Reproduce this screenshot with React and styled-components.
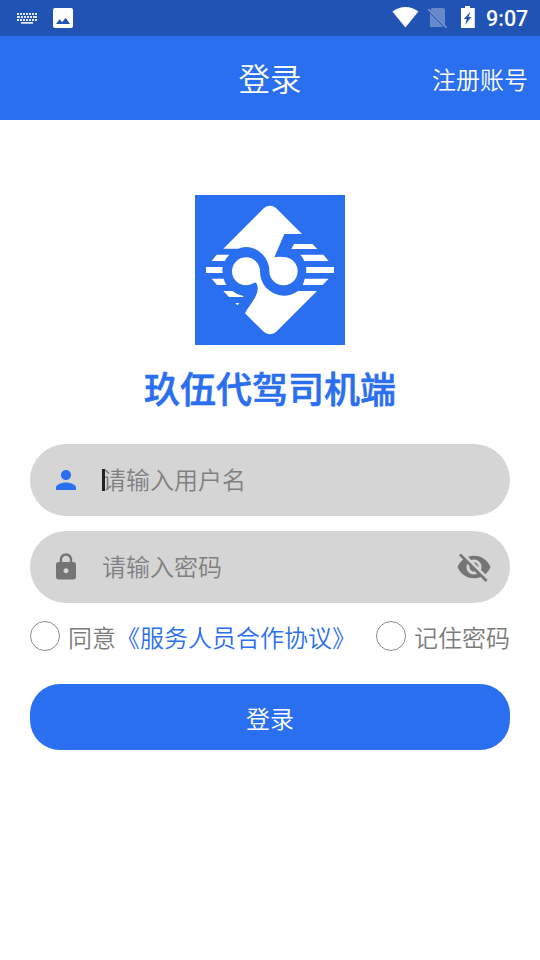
import styled, { createGlobalStyle } from "styled-components";
import { MdLock, MdPerson, MdVisibilityOff } from "react-icons/md";

const GlobalStyle = createGlobalStyle`
  * {
    box-sizing: border-box;
  }

  body {
    margin: 0;
    background: #fff;
    font-family: "Noto Sans CJK SC", sans-serif;
    font-weight: 350;
  }
`;

const Screen = styled.div`
  height: 960px;
  overflow: hidden;
`;

const StatusBar = styled.div`
  display: flex;
  align-items: center;
  justify-content: space-between;
  height: 36px;
  padding: 0 12px 0 16px;
  background: #2153b4;
  color: #fff;

  svg {
    display: block;
  }
`;

const StatusGroup = styled.div`
  display: flex;
  align-items: center;
  gap: ${(props) => props.$gap}px;
  height: 36px;
`;

const Clock = styled.span`
  width: 42px;
  padding-top: 2px;
  font-family: Roboto, sans-serif;
  font-size: 21.5px;
  font-weight: 500;
  line-height: 34px;
  white-space: nowrap;
`;

const Header = styled.header`
  display: grid;
  grid-template-columns: 1fr auto 1fr;
  align-items: center;
  height: 84px;
  padding: 0 12px;
  background: #2b6ff1;
  color: #fff;
`;

const HeaderTitle = styled.h1`
  grid-column: 2;
  margin: 0;
  font-size: 31.5px;
  font-weight: 350;
  line-height: 82px;
  padding-bottom: 2px;
`;

const RegisterLink = styled.a`
  justify-self: end;
  padding-top: 2px;
  font-size: 24px;
  line-height: 82px;
`;

const Content = styled.main`
  display: flex;
  flex-direction: column;
  padding: 75px 30px 0;
`;

const Logo = styled.svg`
  display: block;
  align-self: center;
  width: 150px;
  height: 150px;
  background: #2b6ff1;
`;

const BrandName = styled.h2`
  margin: 15px 0 30px;
  color: #2b6ff1;
  font-size: 36px;
  font-weight: 500;
  line-height: 54px;
  text-align: center;
  -webkit-text-stroke: 0.6px #2b6ff1;
`;

const Field = styled.div`
  display: flex;
  align-items: center;
  height: 72px;
  margin-bottom: 15px;
  padding: 0 18px 0 21px;
  border-radius: 36px;
  background: #d5d5d5;
  color: ${(props) => props.$iconColor || "#757575"};

  svg {
    flex: none;
  }
`;

const Placeholder = styled.span`
  flex: 1;
  margin-left: 21px;
  padding-bottom: 2px;
  color: #808080;
  font-size: 24px;
  line-height: 70px;
`;

const Caret = styled.span`
  z-index: 1;
  width: 3px;
  height: 22px;
  margin: 0 -3px 0 21px;
  background: #222;

  & + ${Placeholder} {
    margin-left: 0;
  }
`;

const Options = styled.div`
  display: flex;
  justify-content: space-between;
  height: 66px;
`;

const Option = styled.label`
  display: flex;
  align-items: center;
  height: 36px;
  color: #7c7c7c;
  font-size: 24px;
  white-space: nowrap;
`;

const OptionText = styled.span`
  padding-top: 2px;
  line-height: 36px;
`;

const Radio = styled.span`
  width: 30px;
  height: 30px;
  margin-right: 8px;
  border: 1.5px solid #8c8c8c;
  border-radius: 50%;
`;

const Agreement = styled.a`
  color: #2b6ff1;
`;

const SubmitButton = styled.button`
  height: 66px;
  padding: 2px 0 0;
  border: 0;
  border-radius: 30px;
  background: #2b6ff1;
  color: #fff;
  font-family: inherit;
  font-size: 24px;
  font-weight: 350;
  line-height: 64px;
`;

const KeyboardIcon = () => (
  <svg width="22" height="12" viewBox="0 0 22 12" fill="#e4ebf7">
    <path d="M1 1h2v2H1zM4 1h2v2H4zM7 1h2v2H7zM10 1h2v2h-2zM13 1h2v2h-2zM16 1h2v2h-2zM19 1h2v2h-2z" />
    <path d="M1 4h3v2H1zM5 4h2v2H5zM8 4h2v2H8zM11 4h2v2h-2zM14 4h2v2h-2zM17 4h4v2h-4z" />
    <path d="M1 7h2v2H1zM4 7h2v2H4zM7 7h2v2H7zM10 7h2v2h-2zM13 7h2v2h-2zM16 7h2v2h-2zM19 7h2v2h-2zM5 10h12v1.8H5z" />
  </svg>
);

const ImageIcon = () => (
  <svg width="20" height="20" viewBox="0 0 20 20">
    <rect width="20" height="20" rx="2" fill="#fff" />
    <path d="M3 16l3.6-4.7 2.5 3 3.6-4.600L17 16z" fill="#2153b4" />
  </svg>
);

const SignalIcons = () => (
  <svg width="84" height="36" viewBox="0 0 84 36" fill="#fff">
    <path d="M0.4 11.6C4 8.7 8.5 7 13.4 7s9.400 1.700 13 4.600L13.400 27.600z" />
    <path
      d="M40 8h11a2 2 0 0 1 2 2v15L38.800 10.400V9zM38 13.200L51.500 27H38z"
      opacity=".32"
    />
    <path d="M36.200 9.200l18.400 18.600" stroke="#fff" strokeWidth="1.600" opacity=".4" />
    <path d="M73 6h5v2h4.800v20H69V8h4z" />
    <path d="M78.600 11.500l-6.800 7.600h3l-1.800 6 6.400-8h-3z" fill="#2153b4" />
  </svg>
);

const BrandLogo = () => (
  <Logo viewBox="15 15 450 450" fill="#fff">
    {/* upper half of the diamond with the bowl of the 5 */}
    <path d="M100 176L222 54Q240 40 258 54L336 132H283L253 202Q265 199 278 201A42.500 42.500 0 1 1 238 244A72 72 0 0 0 168 171Q155 171 145 176Z" />
    {/* lower half with the bowl of the 9 */}
    <path d="M210 244A42 42 0 1 0 168 286Q180 286 190 280Q195 276 198 278C206 288 204 306 196 321C189 335 176 350 165 370L222 426Q240 440 258 426L381 303H324A72 72 0 0 1 280 317A72 72 0 0 1 210 244Z" />
    <path d="M80 194H118Q109 202 105 213H65ZM48 231H98Q96 240 98 249H48ZM65 266H101Q104 277 109 285H81ZM100 303H127Q140 314 160 318V321H117ZM136 339H148L142 346Z" />
    <path d="M312 162H367L382 177H304ZM331 194H400L416 213H343Q339 203 331 194ZM348 231H432V249H348Q350 240 348 231ZM344 266H416L398 285H338Q342 276 344 266Z" />
  </Logo>
);

const App = () => {
  return (
    <Screen>
      <GlobalStyle />
      <StatusBar>
        <StatusGroup $gap={15}>
          <KeyboardIcon />
          <ImageIcon />
        </StatusGroup>
        <StatusGroup $gap={10}>
          <SignalIcons />
          <Clock>9:07</Clock>
        </StatusGroup>
      </StatusBar>
      <Header>
        <HeaderTitle>登录</HeaderTitle>
        <RegisterLink>注册账号</RegisterLink>
      </Header>
      <Content>
        <BrandLogo />
        <BrandName>玖伍代驾司机端</BrandName>
        <Field $iconColor="#2b6ff1">
          <MdPerson size={30} />
          <Caret />
          <Placeholder>请输入用户名</Placeholder>
        </Field>
        <Field>
          <MdLock size={30} />
          <Placeholder>请输入密码</Placeholder>
          <MdVisibilityOff size={36} />
        </Field>
        <Options>
          <Option>
            <Radio />
            <OptionText>
              同意<Agreement>《服务人员合作协议》</Agreement>
            </OptionText>
          </Option>
          <Option>
            <Radio />
            <OptionText>记住密码</OptionText>
          </Option>
        </Options>
        <SubmitButton>登录</SubmitButton>
      </Content>
    </Screen>
  );
};

export default App;
